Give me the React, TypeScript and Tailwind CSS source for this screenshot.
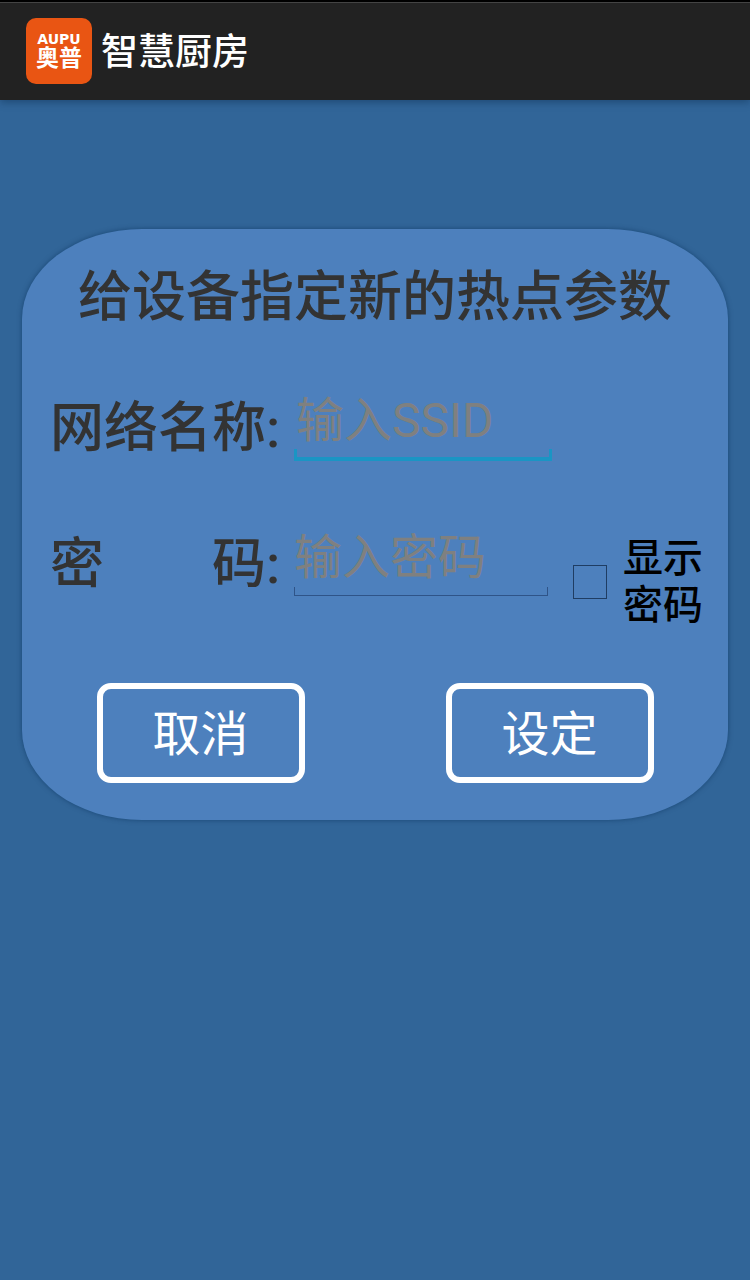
import { useState } from "react";

export default function App() {
    const [ssid, setSsid] = useState("");
    const [password, setPassword] = useState("");
    const [showPassword, setShowPassword] = useState(false);

    return (
        <div className="min-h-screen bg-[#316598] font-['Roboto','Noto_Sans_CJK_SC',sans-serif]">
            <header className="flex h-[100px] items-center gap-2 border-t-2 border-black bg-[#222222] pl-[26px] shadow-[inset_0_1px_0_#444,0_2px_8px_rgba(0,30,60,0.4)]">
                <div className="flex size-[66px] flex-col items-center justify-center rounded-[10px] bg-[#e95513] text-white">
                    <span className="font-['DejaVu_Sans',sans-serif] text-[14px] leading-[16px] font-bold">AUPU</span>
                    <span className="text-[23px] leading-[24px] font-bold">奥普</span>
                </div>
                <h1 className="pt-1 pl-px text-[37px] leading-[48px] font-medium text-white">智慧厨房</h1>
            </header>

            <main className="px-[22px] pt-[129px]">
                <form
                    onSubmit={(e) => e.preventDefault()}
                    className="rounded-[120px/90px] bg-[#4d80bd] pt-9 pb-[37px] text-[#333333] shadow-[0_0_5px_rgba(0,40,80,0.5)]"
                >
                    <h2 className="text-center text-[54px] leading-[66px] font-medium">给设备指定新的热点参数</h2>

                    <div className="mt-[58px] flex items-start pl-7">
                        <label htmlFor="ssid" className="w-[244px] shrink-0 text-[54px] leading-[80px] font-medium whitespace-pre">网络名称:</label>
                        <div className="relative w-[258px] border-b-4 border-[#1a95c4] before:absolute before:bottom-0 before:left-0 before:h-2 before:w-[3px] before:bg-[#1a95c4] after:absolute after:right-0 after:bottom-0 after:h-2 after:w-[3px] after:bg-[#1a95c4]">
                            <input
                                id="ssid"
                                type="text"
                                placeholder="输入SSID"
                                value={ssid}
                                onChange={(e) => setSsid(e.target.value)}
                                className="block h-[68px] w-full bg-transparent px-0.5 pb-1 text-[48px] outline-none placeholder:text-[#7f8080]"
                            />
                        </div>
                    </div>

                    <div className="mt-14 flex items-start pl-7">
                        <label htmlFor="password" className="w-[244px] shrink-0 text-[54px] leading-[80px] font-medium whitespace-pre">密　　码:</label>
                        <div className="relative w-[254px] border-b border-[#2f5488] before:absolute before:bottom-0 before:left-0 before:h-2 before:w-px before:bg-[#2f5488] after:absolute after:right-0 after:bottom-0 after:h-2 after:w-px after:bg-[#2f5488]">
                            <input
                                id="password"
                                type={showPassword ? "text" : "password"}
                                placeholder="输入密码"
                                value={password}
                                onChange={(e) => setPassword(e.target.value)}
                                className="block h-[70px] w-full bg-transparent pb-1 text-[48px] outline-none placeholder:text-[#7f8080]"
                            />
                        </div>
                        <label className="ml-[25px] flex items-center gap-4 pt-[10px] text-[40px] leading-[47px] font-medium text-black">
                            <input
                                type="checkbox"
                                checked={showPassword}
                                onChange={(e) => setShowPassword(e.target.checked)}
                                className="size-[34px] shrink-0 appearance-none border border-[#1f3d63] checked:bg-[#1a95c4]"
                            />
                            <span className="w-20">显示密码</span>
                        </label>
                    </div>

                    <div className="mt-[54px] grid grid-cols-2 justify-items-center px-1 text-[48px] leading-[60px] text-white">
                        <button type="button" className="h-[100px] w-52 rounded-[14px] border-6 border-white pt-1">取消</button>
                        <button type="submit" className="h-[100px] w-52 rounded-[14px] border-6 border-white pt-1">设定</button>
                    </div>
                </form>
            </main>
        </div>
    );
}
